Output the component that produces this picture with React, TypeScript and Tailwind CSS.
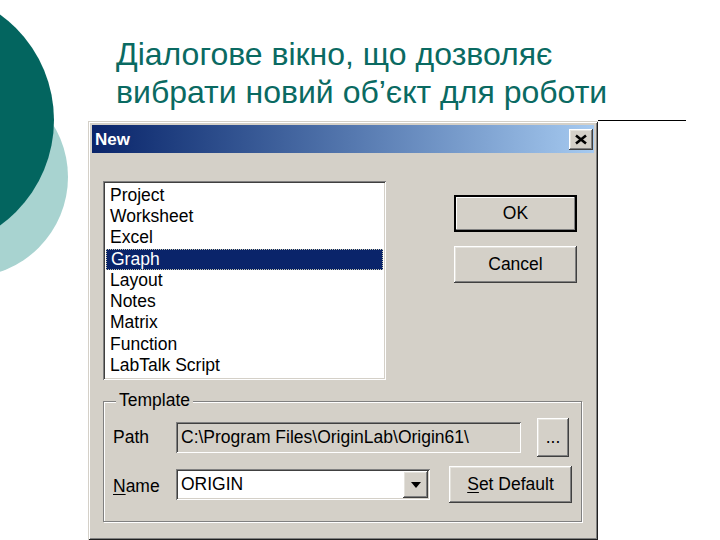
import React from "react"

const raised =
  "bg-[#d4d0c8] shadow-[inset_-1px_-1px_#404040,inset_1px_1px_#ffffff,inset_-2px_-2px_#808080,inset_2px_2px_#e4e2dc]"
const sunken =
  "shadow-[inset_1px_1px_#808080,inset_-1px_-1px_#ffffff,inset_2px_2px_#404040,inset_-2px_-2px_#d4d0c8]"

const items = ["Project", "Worksheet", "Excel", "Graph", "Layout", "Notes", "Matrix", "Function", "LabTalk Script"]

function CloseButton() {
  return (
    <div className={`w-[24px] h-[21px] flex items-center justify-center ${raised}`}>
      <svg width="14" height="11" viewBox="0 0 14 11">
        <path d="M2 1.5 L12 9.5 M12 1.5 L2 9.5" stroke="#000" strokeWidth="2.6" />
      </svg>
    </div>
  )
}

function Button({ children, isDefault }: { children: React.ReactNode; isDefault?: boolean }) {
  return (
    <div
      className={`w-[123px] h-[37px] flex items-center justify-center text-black ${
        isDefault
          ? "bg-[#d4d0c8] shadow-[inset_0_0_0_2px_#000,inset_-3px_-3px_#808080,inset_3px_3px_#ffffff]"
          : raised
      }`}
    >
      {children}
    </div>
  )
}

export default function App() {
  return (
    <div className="relative w-[720px] h-[540px] overflow-hidden bg-white font-['Liberation_Sans',Arial,sans-serif]">
      <div className="absolute left-[-132px] top-[77px] w-[200px] h-[200px] rounded-full bg-[#a8d3d0]" />
      <div className="absolute left-[-206px] top-[-10px] w-[260px] h-[260px] rounded-full bg-[#03655f]" />

      <div className="relative pl-[116px] pt-[35px]">
        <h1 className="text-[32px] leading-[38px] text-[#0a6a62] font-normal whitespace-nowrap">
          Діалогове вікно, що дозволяє
          <br />
          вибрати новий об’єкт для роботи
        </h1>

        <div className="mt-[10px] ml-[-28px] flex items-start">
          <div className="w-[510px] p-[4px] bg-[#d4d0c8] shadow-[inset_1px_1px_#d4d0c8,inset_-1px_-1px_#202020,inset_2px_2px_#ffffff,inset_-2px_-2px_#808080] text-[17.5px] leading-none">
            {/* title bar */}
            <div className="h-[28px] flex items-center justify-between pl-[3px] pr-[1px] bg-linear-to-r from-[#0a246a] to-[#a6caf0]">
              <span className="text-white font-bold text-[17px]">New</span>
              <CloseButton />
            </div>

            <div className="px-[11px] pt-[28px] pb-[14px]">
              <div className="flex items-start">
                {/* list */}
                <div className={`w-[283px] h-[199px] bg-white p-[3px] ${sunken}`}>
                  <div className="pt-[1px]">
                    {items.map((it) => (
                      <div
                        key={it}
                        className={`h-[21.25px] flex items-center pl-[4px] ${
                          it === "Graph"
                            ? "bg-[#0a246a] text-white border border-dotted border-[#c8c8b0] pl-[3px]"
                            : "text-black"
                        }`}
                      >
                        {it}
                      </div>
                    ))}
                  </div>
                </div>

                {/* buttons */}
                <div className="ml-[68px] pt-[14px] flex flex-col gap-[14px]">
                  <Button isDefault>OK</Button>
                  <Button>Cancel</Button>
                </div>
              </div>

              {/* template group */}
              <div className="relative mt-[21px] w-[479px] h-[121px] border border-[#808080] shadow-[inset_1px_1px_#ffffff,1px_1px_#ffffff] pt-[16px] pl-[9px]">
                <span className="absolute left-[12px] top-[-10px] px-[3px] bg-[#d4d0c8] text-black">Template</span>

                <div className="flex items-center h-[39px]">
                  <span className="w-[63px] text-black">Path</span>
                  <div className={`w-[345px] h-[31px] flex items-center pl-[5px] bg-[#d4d0c8] text-black ${sunken}`}>
                    C:\Program Files\OriginLab\Origin61\
                  </div>
                  <div className={`ml-[16px] w-[32px] h-[39px] flex items-center justify-center text-black ${raised}`}>
                    ...
                  </div>
                </div>

                <div className="flex items-center h-[37px] mt-[9px]">
                  <span className="w-[63px] text-black pt-[4px]">
                    <span className="underline underline-offset-2">N</span>ame
                  </span>
                  <div className={`w-[254px] h-[31px] flex items-center justify-between p-[2px] bg-white text-black ${sunken}`}>
                    <span className="pl-[3px]">ORIGIN</span>
                    <div className={`w-[25px] h-[27px] flex items-center justify-center ${raised}`}>
                      <svg width="10" height="6" viewBox="0 0 10 6">
                        <path d="M0 0 H10 L5 6 Z" fill="#000" />
                      </svg>
                    </div>
                  </div>
                  <div className="ml-[19px]">
                    <Button>
                      <span>
                        <span className="underline underline-offset-2">S</span>et Default
                      </span>
                    </Button>
                  </div>
                </div>
              </div>
            </div>
          </div>
          <div className="w-[88px] h-px bg-black mt-[-1px]" />
        </div>
      </div>
    </div>
  )
}
